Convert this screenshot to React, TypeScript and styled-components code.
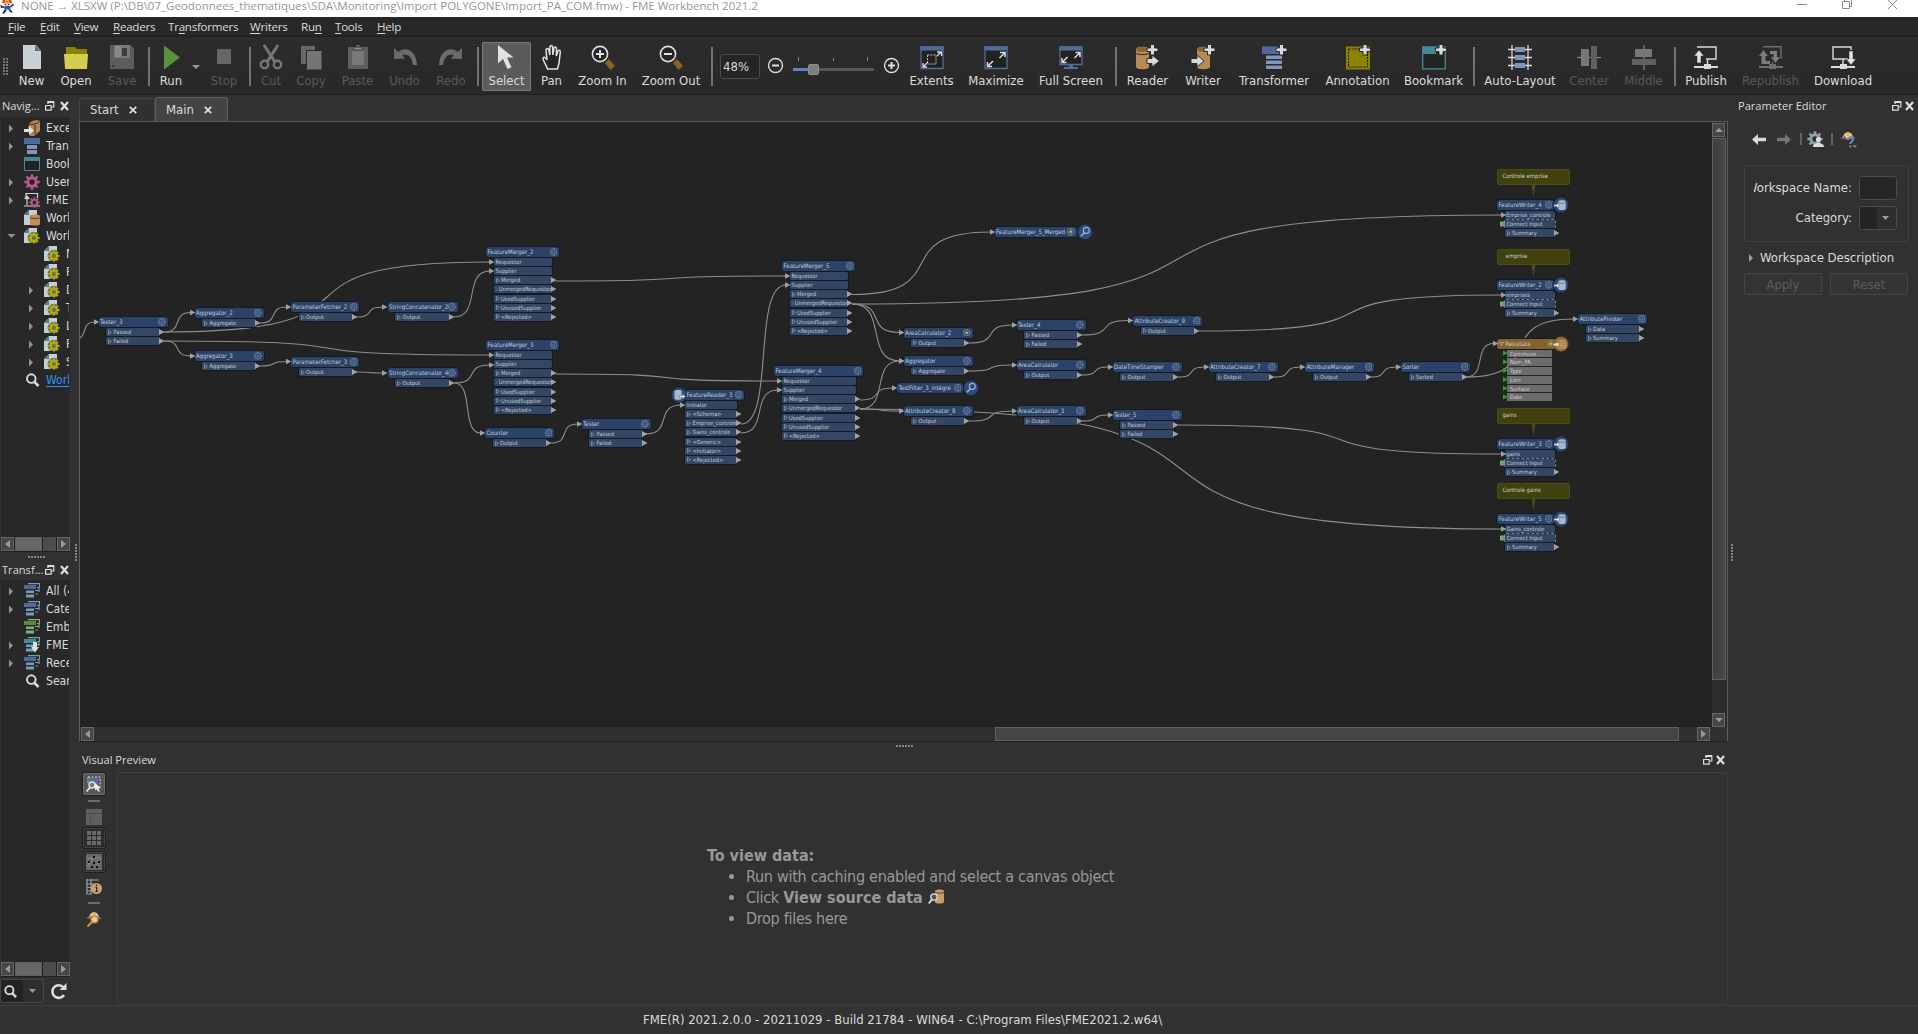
import React from "react";
import styled, { createGlobalStyle, css } from "styled-components";

const UI = `"DejaVu Sans Condensed", "DejaVu Sans", "Noto Sans", sans-serif`;
const CHROME = `"Open Sans", "Noto Sans", sans-serif`;

const Global = createGlobalStyle`
  * { box-sizing: border-box; }
  html, body { margin: 0; padding: 0; background: #313131; }
  body { overflow: hidden; }
`;

/* ---------- shell ---------- */
const Window = styled.div`
  width: 1918px;
  height: 1034px;
  display: flex;
  flex-direction: column;
  overflow: hidden;
  background: #313131;
  color: #dadada;
  font: 13px/16px ${UI};
  font-stretch: condensed;
  white-space: nowrap;
`;
const TitleBar = styled.header`
  height: 17px;
  flex: none;
  display: flex;
  justify-content: space-between;
  background: #fff;
  color: #979797;
  font: 11.5px/14px ${CHROME};
`;
const TitleText = styled.div`
  display: flex;
  gap: 6px;
  height: 14px;
  margin-top: -1px;
`;
const MenuBar = styled.nav`
  height: 20px;
  flex: none;
  display: flex;
  align-items: center;
  gap: 14px;
  padding-left: 8px;
  background: #282828;
  border-bottom: 1px solid #1f1f1f;
  font: 11.6px/18px ${CHROME};
`;
const MenuItem = styled.span<{ $w: number }>`
  width: ${(p) => p.$w}px;
  letter-spacing: -0.25px;
  & > u { text-underline-offset: 2px; }
`;
const Toolbar = styled.div`
  height: 58px;
  flex: none;
  display: flex;
  align-items: stretch;
  background: linear-gradient(#2c2c2c, #282828);
  border-bottom: 1px solid #1f1f1f;
  padding: 5px 0 3px;
`;
const Grip = styled.div`
  width: 10px;
  margin: 16px 0 17px;
  padding-left: 3px;
  & > i {
    display: block;
    width: 6px;
    height: 17px;
    background: radial-gradient(circle at 1px 1px, #757575 1px, transparent 1.2px) 0 0 / 3px 3px;
  }
`;
const ToolButton = styled.div<{ $w: number; $off?: boolean; $on?: boolean }>`
  width: ${(p) => p.$w}px;
  flex: none;
  display: flex;
  flex-direction: column;
  align-items: center;
  padding-top: 2px;
  color: ${(p) => (p.$off ? "#595959" : "#dcdcdc")};
  ${(p) =>
    p.$on &&
    css`
      background: #5b5b5b;
      border-radius: 2px;
      box-shadow: inset 0 0 0 1px #7a7a7a;
    `}
  & > svg { flex: none; }
  & > span { margin-top: 3px; line-height: 16px; }
`;
const ToolSep = styled.div<{ $w: number }>`
  width: ${(p) => p.$w}px;
  flex: none;
  display: flex;
  justify-content: center;
  padding: 5px 0;
  &::before { content: ""; width: 2px; height: 39px; background: #737373; }
`;
const RunMenu = styled.div`
  width: 14px;
  padding: 15px 3px 0;
`;
const ZoomBox = styled.div`
  width: 40px;
  height: 25px;
  margin: 12px 7px 0 5px;
  padding-left: 2px;
  line-height: 23px;
  border: 1px solid #4b4b4b;
  border-radius: 3px;
  background: #242424;
`;
const ZoomSlider = styled.div`
  display: flex;
  align-items: center;
  gap: 9px;
  width: 135px;
  padding-bottom: 2px;
`;

/* ---------- body ---------- */
const Body = styled.main`
  height: 910px;
  flex: none;
  display: flex;
`;
const LeftDock = styled.aside`
  width: 70px;
  flex: none;
  display: flex;
  flex-direction: column;
  overflow: hidden;
`;
const DockTitle = styled.div<{ $h: number; $pl: number; $pr: number }>`
  height: ${(p) => p.$h}px;
  flex: none;
  display: flex;
  align-items: center;
  justify-content: space-between;
  padding: 0 ${(p) => p.$pr}px 0 ${(p) => p.$pl}px;
  font: 11.1px/16px ${CHROME};
  & > svg { flex: none; }
`;
const Tree = styled.div<{ $h: number }>`
  height: ${(p) => p.$h}px;
  flex: none;
  display: flex;
  flex-direction: column;
  justify-content: space-between;
  margin-left: 1px;
  padding-top: 2px;
  background: #282828;
  overflow: hidden;
`;
const TreeRow = styled.div<{ $deep?: boolean; $link?: boolean }>`
  height: 18px;
  width: 68px;
  display: flex;
  align-items: center;
  padding-left: ${(p) => (p.$deep ? 26 : 6)}px;
  overflow: hidden;
  & > svg { flex: none; }
  & > svg + svg { margin-left: 8px; }
  & > span {
    margin-left: 6px;
    font-size: 12.1px;
    ${(p) => p.$link && "color:#2e93f0; text-decoration: underline; text-underline-offset: 2px;"}
  }
`;
const HBar = styled.div`
  height: 15px;
  flex: none;
  display: flex;
  gap: 1px;
  padding-bottom: 1px;
  background: #1f1f1f;
`;
const BarButton = styled.div`
  width: 13px;
  height: 14px;
  flex: none;
  display: flex;
  align-items: center;
  justify-content: center;
  border: 1px solid #666;
  background: #464646;
`;
const BarThumb = styled.div<{ $w?: number; $h?: number; $tone?: string; $ml?: number }>`
  ${(p) => (p.$w ? `width:${p.$w}px;` : "")}
  ${(p) => (p.$h ? `height:${p.$h}px;` : "")}
  ${(p) => (p.$ml ? `margin-left:${p.$ml}px;` : "")}
  flex: none;
  border: 1px solid #606060;
  background: ${(p) => p.$tone ?? "#676767"};
`;
const BarGroove = styled.div`
  flex: 1;
  background: #4c4c4c;
`;
const Dots = styled.div<{ $vertical?: boolean }>`
  width: ${(p) => (p.$vertical ? 2 : 17)}px;
  height: ${(p) => (p.$vertical ? 17 : 2)}px;
  background: repeating-linear-gradient(
    ${(p) => (p.$vertical ? "180deg" : "90deg")}, #858585 0 2px, transparent 2px 3px);
`;
const SplitRow = styled.div<{ $h: number; $pl: number; $pt: number }>`
  height: ${(p) => p.$h}px;
  flex: none;
  padding: ${(p) => p.$pt}px 0 0 ${(p) => p.$pl}px;
`;
const SplitCol = styled.div<{ $w: number; $pl: number }>`
  width: ${(p) => p.$w}px;
  flex: none;
  padding: 449px 0 0 ${(p) => p.$pl}px;
`;
const SearchRow = styled.div`
  height: 28px;
  display: flex;
  align-items: center;
  gap: 6px;
`;
const SearchCombo = styled.div`
  width: 44px;
  height: 24px;
  display: flex;
  align-items: center;
  gap: 12px;
  padding-left: 3px;
  border: 1px solid #474747;
  border-radius: 2px;
  background: linear-gradient(90deg, #222 22px, #2e2e2e 22px);
`;

/* ---------- centre ---------- */
const Centre = styled.section`
  width: 1650px;
  flex: none;
  display: flex;
  flex-direction: column;
`;
const Tabs = styled.div`
  height: 26px;
  flex: none;
  display: flex;
  align-items: flex-end;
`;
const Tab = styled.div<{ $on?: boolean }>`
  width: ${(p) => (p.$on ? 73 : 76)}px;
  height: ${(p) => (p.$on ? 24 : 23)}px;
  display: flex;
  align-items: center;
  justify-content: space-between;
  padding: 0 ${(p) => (p.$on ? 15 : 17)}px 0 10px;
  border: 1px solid ${(p) => (p.$on ? "#5f5f5f" : "#464646")};
  border-bottom: 0;
  border-radius: 3px 3px 0 0;
  background: ${(p) => (p.$on ? "#434343" : "#303030")};
`;
const CanvasFrame = styled.div`
  height: 621px;
  flex: none;
  display: grid;
  grid-template-columns: 1632px 15px;
  grid-template-rows: 605px 14px;
  width: 1649px;
  border: 1px solid #5c5c5c;
  border-bottom-color: #212121;
  background: #303030;
`;
const Canvas = styled.div`
  position: relative;
  overflow: hidden;
  background: #232323;
`;
const VBar = styled.div`
  display: flex;
  flex-direction: column;
  gap: 1px;
  padding: 1px 1px 0 0;
  background: #2c2c2c;
  & > ${BarButton}:last-child { margin-top: auto; }
`;
const CanvasHBar = styled.div`
  display: flex;
  justify-content: space-between;
  padding: 0 2px 0 1px;
`;
const Wires = styled.svg`
  position: absolute;
  left: 0;
  top: 0;
`;
const PreviewBody = styled.div`
  display: flex;
  height: 232px;
`;
const PreviewTools = styled.div`
  width: 38px;
  padding-left: 3px;
  display: flex;
  flex-direction: column;
`;
const PreviewTool = styled.div<{ $frame?: "on" | "line"; $h: number; $mb?: number }>`
  width: 24px;
  height: ${(p) => p.$h}px;
  margin-bottom: ${(p) => p.$mb ?? 0}px;
  flex: none;
  display: flex;
  align-items: center;
  justify-content: center;
  border: 1px solid ${(p) => (p.$frame ? "#1f1f1f" : "transparent")};
  border-radius: 3px;
  ${(p) => p.$frame === "on" && "background:#565656; box-shadow: inset 0 0 0 1px #6d6d6d;"}
  ${(p) => p.$frame === "line" && "background:#2b2b2b; box-shadow: inset 0 0 0 1px #434343;"}
`;
const ToolDash = styled.div`
  width: 12px;
  height: 2px;
  margin: 4px 6px 5px;
  flex: none;
  background: #6c6c6c;
`;
const PreviewPane = styled.div`
  flex: none;
  width: 1611px;
  border: 1px solid #3e3e3e;
  border-radius: 2px;
  padding: 72px 0 0 589px;
  color: #989898;
  font-size: 16px;
  line-height: 21px;
`;
const Hints = styled.ul`
  margin: 0;
  padding: 0 0 0 39px;
  letter-spacing: -0.28px;
  & b { letter-spacing: 0; }
  & svg { vertical-align: -1px; margin-left: 5px; }
`;

/* ---------- parameter editor ---------- */
const RightDock = styled.aside`
  width: 184px;
  flex: none;
`;
const EditorTools = styled.div`
  height: 44px;
  margin-bottom: 4px;
  display: flex;
  align-items: center;
  padding: 0 0 0 16px;
`;
const EditorSep = styled.i<{ $l: number; $r: number }>`
  width: 2px;
  height: 12px;
  margin: 0 ${(p) => p.$r}px 0 ${(p) => p.$l}px;
  background: #626262;
`;
const Group = styled.div`
  width: 165px;
  height: 77px;
  margin-left: 10px;
  padding: 10px 12px 0 9px;
  border: 1px solid #3f3f3f;
  border-radius: 2px;
  display: grid;
  grid-template-columns: 98px 38px;
  grid-template-rows: 24px 24px;
  gap: 6px 7px;
`;
const FieldLabel = styled.label`
  display: flex;
  justify-content: flex-end;
  align-items: center;
  overflow: hidden;
`;
const Field = styled.div<{ $combo?: boolean }>`
  border: 1px solid #4a4a4a;
  border-radius: 3px;
  background: ${(p) => (p.$combo ? "linear-gradient(90deg,#242424 17px,#2e2e2e 17px)" : "#262626")};
  display: flex;
  align-items: center;
  justify-content: flex-end;
  padding-right: 7px;
`;
const Disclosure = styled.div`
  height: 31px;
  display: flex;
  align-items: center;
  gap: 7px;
  padding-left: 15px;
`;
const ButtonRow = styled.div`
  display: flex;
  gap: 8px;
  padding-left: 10px;
`;
const FlatButton = styled.div`
  width: 78px;
  height: 22px;
  border: 1px solid #464646;
  border-radius: 2px;
  background: #343434;
  color: #5c5c5c;
  text-align: center;
  line-height: 21px;
`;
const StatusBar = styled.footer`
  flex: 1;
  border-top: 1px solid #3f3f3f;
  border-bottom: 2px solid #282428;
  padding-left: 643px;
  line-height: 28px;
  background: #323232;
`;

/* ---------- canvas objects ---------- */
const NodeBox = styled.div`
  position: absolute;
  display: flex;
  flex-direction: column;
  font: 6.05px/8px ${UI};
  font-stretch: condensed;
  color: #c3ccd8;
`;
const NodeHead = styled.div<{ $w: number; $gold?: boolean }>`
  width: ${(p) => p.$w}px;
  height: 10px;
  display: flex;
  align-items: center;
  justify-content: space-between;
  padding: 0 2px 0 1.5px;
  border-radius: 2.5px;
  background: ${(p) => (p.$gold ? "#866229" : "#2b4368")};
  box-shadow: 0 0 0 1px #151b25;
  & > svg { flex: none; }
`;
const Ports = styled.div<{ $ml: number }>`
  display: flex;
  flex-direction: column;
  gap: 1px;
  margin: 1px 0 0 ${(p) => p.$ml}px;
  font-size: 5.7px;
`;
const PortRow = styled.div<{ $w: number; $dashed?: boolean }>`
  width: ${(p) => p.$w + 4}px;
  height: 8.15px;
  display: flex;
  align-items: center;
  & > span {
    width: ${(p) => p.$w}px;
    height: 8px;
    flex: none;
    display: flex;
    align-items: center;
    gap: 1.5px;
    padding-left: 2px;
    border-radius: 1.5px;
    background: #334764;
    box-shadow: 0 0 0 1px #161a20;
    ${(p) => p.$dashed && "outline: 1px dashed #71809a; outline-offset: -0.5px; box-shadow: none;"}
  }
  & > svg { flex: none; margin-left: -1px; }
`;
const Badge = styled.svg`
  position: absolute;
  top: -3px;
`;
const AttrRow = styled.div`
  width: 45px;
  height: 7.8px;
  padding-left: 3px;
  background: #6c6c6c;
  color: #d0d0d0;
`;
const Note = styled.div`
  position: absolute;
  width: 73px;
  height: 16px;
  padding-left: 5px;
  border: 1px solid #4a4d1b;
  border-radius: 2px;
  background: #3f420d;
  color: #d2d2c0;
  font: 5.9px/13px ${UI};
  font-stretch: condensed;
  & > svg { position: absolute; left: 33px; top: 14px; }
`;

/* ---------- small glyphs ---------- */
const Tri = ({ dir = "right", c = "#9a9a9a", w = 5, h = 8 }: { dir?: string; c?: string; w?: number; h?: number }) => (
  <svg width={w} height={h} viewBox="0 0 10 10" preserveAspectRatio="none">
    <path fill={c} d={dir === "right" ? "M0 0L10 5L0 10Z" : dir === "left" ? "M10 0L0 5L10 10Z" : dir === "up" ? "M0 10L5 0L10 10Z" : "M0 0H10L5 10Z"} />
  </svg>
);
const Cross = ({ s = 9 }: { s?: number }) => (
  <svg width={s} height={s} viewBox="0 0 10 10"><path d="M1 1L9 9M9 1L1 9" stroke="#dedede" strokeWidth="2.2" /></svg>
);
const DockButtons = ({ gap = 4 }: { gap?: number }) => (
  <svg width={18 + gap} height="10" viewBox={`0 0 ${18 + gap} 10`} fill="none">
    <path d="M3 3V0.8H8.8V6H6.5" stroke="#dedede" strokeWidth="1.2" /><path d="M2.5 1H9" stroke="#dedede" strokeWidth="2" />
    <path d="M0.6 4.5H6.2V9.2H0.6Z" stroke="#dedede" strokeWidth="1.2" />
    <path d={`M${10 + gap} 1l7 8m0 -8l-7 8`} stroke="#dedede" strokeWidth="2.2" />
  </svg>
);
const gearPath = (n: number, r: number, R: number, c: number) => {
  const p: string[] = [];
  for (let i = 0; i < n; i++) {
    const a = (i * 2 * Math.PI) / n;
    const s = Math.PI / n;
    [[a - s * 0.62, r], [a - s * 0.42, R], [a + s * 0.42, R], [a + s * 0.62, r]].forEach(([t, q]) =>
      p.push(`${(c + q * Math.cos(t)).toFixed(2)} ${(c + q * Math.sin(t)).toFixed(2)}`)
    );
  }
  return `M${p.join("L")}Z`;
};
const GEAR = gearPath(8, 5.6, 7.8, 8);
const Gear = ({ c }: { c: string }) => (
  <path fillRule="evenodd" fill={c} d={`${GEAR}M8 5.2a2.8 2.8 0 1 0 0.01 0Z`} />
);
const Plus = () => <path d="M14 5.5h3.5V2h4v3.5H25v3.5h-3.5v3.5h-4V9H14z" fill="#d9d9d9" stroke="#2b2b2b" strokeWidth="1" />;

const Search = ({ s = 14 }: { s?: number }) => (
  <svg width={s} height={s} viewBox="0 0 14 14" fill="none" stroke="#dcdcdc">
    <circle cx="5.8" cy="5.6" r="4.4" strokeWidth="2" /><path d="M9 9L13 13" strokeWidth="2.6" />
  </svg>
);

/* ---------- toolbar drawings (24 x 26) ---------- */
const toolArt: Record<string, React.ReactNode> = {
  New: <><path d="M3 1H16L21 7V25H3Z" fill="#c9d1d4" /><path d="M15 1L21 7H15Z" fill="#5b7688" /></>,
  Open: <><path d="M2 12V3H11L13 5H23V12Z" fill="#8d8200" /><path d="M0 10H24L23 25H1Z" fill="#d3cd50" /></>,
  Save: <><path d="M0 1H20L24 4V25H0Z" fill="#5c5c5c" /><path d="M4 1H20V14H4Z" fill="#777" /><path d="M5 2H11V13H5Z" fill="#8a8a8a" /><path d="M12 4H17V12H12Z" fill="#3c3c3c" /><path d="M2.500 21H4V23H2.500Z" fill="#222" /></>,
  Run: <path d="M5 1.500L21 13.500L5 25.500Z" fill="#5a9340" />,
  Stop: <path d="M5 5H19V20H5Z" fill="#666" />,
  Cut: <g fill="none" stroke="#767676"><path d="M5 1L16 18M19 1L8 18" strokeWidth="3" /><circle cx="5.500" cy="20.500" r="3.700" strokeWidth="2.400" /><circle cx="18.500" cy="20.500" r="3.700" strokeWidth="2.400" /></g>,
  Copy: <><path d="M2 2H16V20H2Z" fill="#676767" /><path d="M7.500 6.500H23V26H7.500Z" fill="#757575" stroke="#2a2a2a" /></>,
  Paste: <><path d="M2 3H22V25H2Z" fill="#5f5f5f" /><path d="M6 7H18V21H6Z" fill="#787878" /><path d="M8 3H16V6H8ZM10 1H14V3H10Z" fill="#8a8a8a" stroke="#2a2a2a" strokeWidth=".6" /></>,
  Undo: <path d="M1 4L5 8C13 2 23 6 24 21H20C19 12 14 9 9 11L12 14.500L1 15Z" fill="#6c6c6c" />,
  Redo: <path d="M23 4L19 8C11 2 1 6 0 21H4C5 12 10 9 15 11L12 14.500L23 15Z" fill="#6c6c6c" />,
  Select: <path d="M3 1V19.500L8 15L12.500 25L16.500 23.200L12 13.500H18.500Z" fill="#e0e0e0" />,
  Pan: <path d="M7.500 25C6 20 3.500 18 3 14.500C3.500 12.500 5.500 13 7 16L6 6C6.500 4 8.300 4 8.800 6L9.800 11L9.900 3C10.300 1 12.300 1 12.600 3L12.900 11L14 4C14.600 2.500 16.300 2.600 16.500 4.500L16.300 12L18 7C19 5.500 20.500 6.500 20.300 8L19 19L17.500 25Z" fill="#242424" stroke="#e2e2e2" strokeWidth="1.500" />,
  "Zoom In": <><path d="M14 19L18 15L24 22L19.500 26Z" fill="#8a6127" /><circle cx="9" cy="10" r="7.600" fill="#252525" stroke="#dedede" strokeWidth="1.600" /><path d="M5 10H13M9 6V14" stroke="#e2e2e2" strokeWidth="2" /></>,
  "Zoom Out": <><path d="M14 19L18 15L24 22L19.500 26Z" fill="#8a6127" /><circle cx="9" cy="10" r="7.600" fill="#252525" stroke="#dedede" strokeWidth="1.600" /><path d="M5 10H13" stroke="#e2e2e2" strokeWidth="2" /></>,
  Extents: <><path d="M1 3H23V24.500H1Z" fill="#222" stroke="#526c98" strokeWidth="1.300" /><path d="M0.500 2.500H23.500V6.500H0.500Z" fill="#526c98" /><path d="M7.500 11H16V20H7.500Z" fill="none" stroke="#bbb" strokeDasharray="2 1" /><path d="M17 8H21.500V12M21 8L17 12M3 19V23H7M3.500 22.500L8 18" fill="none" stroke="#ddd" strokeWidth="1.300" /></>,
  Maximize: <><path d="M1 3H23V24.500H1Z" fill="#222" stroke="#526c98" strokeWidth="1.300" /><path d="M0.500 2.500H23.500V6.500H0.500Z" fill="#526c98" /><path d="M16 8.500H21V13M20.500 9L15.500 14M3.500 18V22.500H8M4 22L9 17" fill="none" stroke="#ddd" strokeWidth="1.500" /></>,
  "Full Screen": <><path d="M1 3H23V20.500H1Z" fill="#222" stroke="#526c98" strokeWidth="1.300" /><path d="M0.500 2.500H23.500V6.500H0.500ZM10 20H14V23H19V25H5V23H10Z" fill="#526c98" /><path d="M16.500 8.500H21V13M20.500 9L15.500 14M3 14V18.500H7.500M3.500 18L8.500 13" fill="none" stroke="#ddd" strokeWidth="1.500" /></>,
  Reader: <><path d="M0 5C0 2 13 2 13 5V23C13 26 0 26 0 23Z" fill="#b88a55" /><ellipse cx="6.500" cy="5.500" rx="6.500" ry="2.500" fill="#8b6537" /><path d="M0 9C0 11 13 11 13 9" stroke="#2a2a2a" fill="none" /><g transform="translate(-3 -1.500)"><Plus /></g><path d="M11 14.500H16V11L23.500 17L16 23V19.500H11Z" fill="#d9d9d9" stroke="#2b2b2b" /></>,
  Writer: <><path d="M6 5C6 2 19 2 19 5V23C19 26 6 26 6 23Z" fill="#b88a55" /><ellipse cx="12.500" cy="5.500" rx="6.500" ry="2.500" fill="#8b6537" /><g transform="translate(-1 -1.500)"><Plus /></g><path d="M0 14.500H6V11L13 17L6 23V19.500H0Z" fill="#d9d9d9" stroke="#2b2b2b" /></>,
  Transformer: <><path d="M0 2.500H22V10H0Z" fill="#4f6a9b" /><path d="M4 11.500H20V15H4ZM4 16.500H20V20H4ZM4 21.500H20V25H4Z" fill="#7f98ba" /><g transform="translate(0 -1.500)"><Plus /></g></>,
  Annotation: <><path d="M0 2.500H24V25.500H0Z" fill="#8c8300" /><path d="M2.500 5H21.500V23H2.500Z" fill="none" stroke="#1f1f1f" strokeDasharray="2 1" /><g transform="translate(-.5 -1.500)"><Plus /></g></>,
  Bookmark: <><path d="M.7 3.200H23.300V24.800H.7Z" fill="#242424" stroke="#43899a" strokeWidth="1.300" /><path d="M0 2.500H14V10H0Z" fill="#43899a" /><g transform="translate(-.5 -1.500)"><Plus /></g></>,
  "Auto-Layout": <><path d="M0 5.500H24M0 13.500H24M0 21.500H24M4 1V26M20 1V26" stroke="#d8d8d8" strokeWidth="1.300" /><path d="M7 3H17V8H7ZM7 11H17V16H7ZM7 19H17V24H7Z" fill="#7c96b8" /></>,
  Center: <><path d="M0 13.500H24" stroke="#888" strokeWidth="1.200" /><path d="M4 5H12V22H4Z" fill="#777" /><path d="M14 2H20V25H14Z" fill="#606060" /></>,
  Middle: <><path d="M12 1V26" stroke="#888" strokeWidth="1.200" /><path d="M3 5H20V13H3Z" fill="#777" /><path d="M0 15H24V21H0Z" fill="#606060" /></>,
  Publish: <><path d="M3 3H22V15H12M13.500 15V22" fill="none" stroke="#dcdcdc" strokeWidth="1.400" /><path d="M0 23H24M10 23H17" stroke="#dcdcdc" strokeWidth="2" /><path d="M10 20H17V25H10Z" fill="#dcdcdc" /><path d="M5 6L10 12H7V19H3V12H0Z" fill="#e2e2e2" stroke="#2b2b2b" strokeWidth=".5" /></>,
  Republish: <><path d="M4 2.700H22V15M13.500 18V22" fill="none" stroke="#6e6e6e" strokeWidth="1.400" /><path d="M0 23H24" stroke="#6e6e6e" strokeWidth="2" /><path d="M10 20H17V25H10Z" fill="#6e6e6e" /><path d="M4.500 6L9 12H6.500V17H11V20H2.500V12H0ZM11 7H18V13H21L16.500 19L12 13H14.500V10H11Z" fill="#7d7d7d" /></>,
  Download: <><path d="M17 15H2V3H20V6M12 15V22" fill="none" stroke="#dcdcdc" strokeWidth="1.400" /><path d="M0 23H24" stroke="#dcdcdc" strokeWidth="2" /><path d="M9 20H16V25H9Z" fill="#dcdcdc" /><path d="M18 7H22V15H25L20 21L15 15H18Z" fill="#e2e2e2" stroke="#2b2b2b" strokeWidth=".5" /></>,
};
const Tool = ({ name, w, off, on }: { name: string; w: number; off?: boolean; on?: boolean }) => (
  <ToolButton $w={w} $off={off} $on={on}>
    <svg width="24" height="26" viewBox="0 0 24 26" overflow="visible">{toolArt[name]}</svg>
    <span>{name}</span>
  </ToolButton>
);

/* ---------- tree drawings (16 x 16) ---------- */
const page = <><path d="M5 0H13V15H0V5Z" fill="#c5cfd3" /><path d="M5 0V5H0Z" fill="#5d7a88" /></>;
const gallery = (a: string, b: string) => (
  <><path d="M4 .6H15.500V4.500M15 9V4.500H13M14.500 7.500H11M14 11H11.500" fill="none" stroke={b} strokeWidth="1.200" /><path d="M0 2H12V6H0Z" fill={a} /><path d="M2 7.500H10V10H2ZM2 11.500H10V14.500H2Z" fill={b} /></>
);
const treeArt: Record<string, React.ReactNode> = {
  reader: <><path d="M5 4C7 0 16 -1 16 2V11L10 16H6L4 10Z" fill="#b58650" /><path d="M5 4C9 5 12 4 15 2M11 5V14" stroke="#2a2a2a" fill="none" /><path d="M0 9H5V6L10 10.500L5 15V12H0Z" fill="#e0e0e0" /></>,
  transformer: <><path d="M0 0H16V6H0Z" fill="#4f6a9b" /><path d="M3 7H13V11H3ZM3 12H13V16H3Z" fill="#7f98ba" /></>,
  bookmark: <><path d="M.5 1.500H15.500V14.500H.5Z" fill="#222" stroke="#43899a" /><path d="M0 1H16V5H0Z" fill="#43899a" /></>,
  pink: <Gear c="#b4588e" />,
  fmeParam: <><path d="M2 5V1.500H13.500V6M0 14H16M3 13V6" stroke="#d5d5d5" fill="none" strokeWidth="1.200" /><path d="M3 3L6 7H0Z" fill="#d5d5d5" /><g transform="translate(5 5) scale(.68)"><Gear c="#b4588e" /></g></>,
  resource: <>{page}<path d="M6 6C6 4 16 4 16 6V14C16 16 6 16 6 14Z" fill="#bd8d56" /><path d="M6 7.500C6 9 16 9 16 7.500" stroke="#2a2a2a" fill="none" strokeWidth=".8" /></>,
  param: <>{page}<g transform="translate(4 4) scale(.74)"><circle cx="8" cy="8" r="8.500" fill="#2b2b20" opacity=".6" /><Gear c="#b6ae00" /></g></>,
  all: gallery("#4f6a9b", "#7f98ba"),
  green: gallery("#568c3c", "#8aae78"),
  hub: <>{gallery("#43899a", "#6fa8b4")}<path d="M9 5H13V10H15L11 15.500L7 10H9Z" fill="#dedede" /></>,
};
type Row = { art: string; text: string; arrow?: string; deep?: boolean; link?: boolean };
const TreeItem = ({ art, text, arrow, deep, link }: Row) => (
  <TreeRow $deep={deep} $link={link}>
    <svg width="9" height="9" viewBox="0 0 9 9">
      {arrow === "r" && <path d="M2 0.500L6 4.500L2 8.500Z" fill="#929292" />}
      {arrow === "d" && <path d="M0.500 2H8.500L4.500 6Z" fill="#929292" />}
    </svg>
    {art === "search" ? (
      <svg width="16" height="16" viewBox="-1.500 -1 16 16" fill="none" stroke="#dcdcdc"><circle cx="5.800" cy="5.600" r="4.300" strokeWidth="1.900" /><path d="M9 9L13 13" strokeWidth="2.500" /></svg>
    ) : (
      <svg width="16" height="16" viewBox="0 0 16 16">{treeArt[art]}</svg>
    )}
    <span>{text}</span>
  </TreeRow>
);
const navRows: Row[] = [
  { art: "reader", text: "Exce", arrow: "r" },
  { art: "transformer", text: "Trans", arrow: "r" },
  { art: "bookmark", text: "Book" },
  { art: "pink", text: "User", arrow: "r" },
  { art: "fmeParam", text: "FME", arrow: "r" },
  { art: "resource", text: "Work" },
  { art: "param", text: "Work", arrow: "d" },
  { art: "param", text: "N", deep: true },
  { art: "param", text: "P", deep: true },
  { art: "param", text: "D", deep: true, arrow: "r" },
  { art: "param", text: "T", deep: true, arrow: "r" },
  { art: "param", text: "L", deep: true, arrow: "r" },
  { art: "param", text: "R", deep: true, arrow: "r" },
  { art: "param", text: "S", deep: true, arrow: "r" },
  { art: "search", text: "Work", link: true },
];
const galleryRows: Row[] = [
  { art: "all", text: "All (4", arrow: "r" },
  { art: "all", text: "Cate", arrow: "r" },
  { art: "green", text: "Emb" },
  { art: "hub", text: "FME", arrow: "r" },
  { art: "all", text: "Rece", arrow: "r" },
  { art: "search", text: "Sear" },
];

/* ---------- workflow data, in window coordinates; OX/OY is the canvas origin ---------- */
const OX = 80;
const OY = 122;
type NodeT = { n: string; x: number; y: number; w: number; pw: number; pl?: number; ins?: string[]; outs?: string[]; badge?: "view" | "write" | "read"; on?: boolean };
const merger = ["Merged", "UnmergedRequestor", "UsedSupplier", "UnusedSupplier", "<Rejected>"];
const nodes: NodeT[] = [
  { n: "Tester_3", x: 98.5, y: 322, w: 69, pw: 54, outs: ["Passed", "Failed"] },
  { n: "Aggregator_2", x: 194.5, y: 313, w: 69, pw: 54, outs: ["Aggregate"] },
  { n: "Aggregator_3", x: 194.5, y: 356, w: 69, pw: 54, outs: ["Aggregate"] },
  { n: "ParameterFetcher_2", x: 291, y: 307, w: 68, pw: 54, outs: ["Output"] },
  { n: "ParameterFetcher_3", x: 291, y: 362, w: 68, pw: 54, outs: ["Output"] },
  { n: "StringConcatenator_2", x: 387.5, y: 307, w: 70, pw: 55, outs: ["Output"] },
  { n: "StringConcatenator_4", x: 387.5, y: 373, w: 70, pw: 55, outs: ["Output"] },
  { n: "FeatureMerger_2", x: 486, y: 252, w: 73, pw: 58, ins: ["Requestor", "Supplier"], outs: merger },
  { n: "FeatureMerger_3", x: 486, y: 345, w: 73, pw: 58, ins: ["Requestor", "Supplier"], outs: merger },
  { n: "Counter", x: 485, y: 433, w: 69, pw: 54, outs: ["Output"] },
  { n: "Tester", x: 581.5, y: 424, w: 69, pw: 54, outs: ["Passed", "Failed"] },
  { n: "FeatureReader_3", x: 685, y: 395, w: 59, pw: 52, pl: 0, ins: ["Initiator"], outs: ["<Schema>", "Emprise_controle", "Gains_controle", "<Generic>", "<Initiator>", "<Rejected>"], badge: "read" },
  { n: "FeatureMerger_5", x: 782, y: 266, w: 73, pw: 58, ins: ["Requestor", "Supplier"], outs: merger },
  { n: "FeatureMerger_4", x: 774, y: 371, w: 89, pw: 74, ins: ["Requestor", "Supplier"], outs: merger },
  { n: "AreaCalculator_2", x: 903.5, y: 332.5, w: 69, pw: 54, outs: ["Output"], on: true },
  { n: "Aggregator", x: 903.5, y: 361, w: 69, pw: 54, outs: ["Aggregate"] },
  { n: "TestFilter_3_intégré", x: 897, y: 388, w: 66, pw: 0, badge: "view" },
  { n: "AttributeCreator_8", x: 903.5, y: 411, w: 69, pw: 54, outs: ["Output"] },
  { n: "FeatureMerger_5_Merged", x: 994.5, y: 232, w: 82, pw: 0, badge: "view", on: true },
  { n: "Tester_4", x: 1016.5, y: 325, w: 69, pw: 54, outs: ["Passed", "Failed"] },
  { n: "AttributeCreator_9", x: 1133, y: 320.5, w: 69, pw: 54, outs: ["Output"] },
  { n: "AreaCalculator", x: 1016.5, y: 365, w: 69, pw: 54, outs: ["Output"] },
  { n: "DateTimeStamper", x: 1112.5, y: 367, w: 69, pw: 54, outs: ["Output"] },
  { n: "AttributeCreator_7", x: 1208.5, y: 367, w: 69, pw: 54, outs: ["Output"] },
  { n: "AreaCalculator_3", x: 1016.5, y: 411, w: 69, pw: 54, outs: ["Output"] },
  { n: "Tester_5", x: 1112.5, y: 415, w: 69, pw: 54, outs: ["Passed", "Failed"] },
  { n: "AttributeManager", x: 1305, y: 367, w: 69, pw: 54, outs: ["Output"] },
  { n: "Sorter", x: 1401, y: 367, w: 69, pw: 54, outs: ["Sorted"] },
  { n: "AttributePivoter", x: 1578, y: 319, w: 69, pw: 54, outs: ["Data", "Summary"] },
  { n: "FeatureWriter_4", x: 1497, y: 205, w: 57, pw: 50, ins: ["Emprise_controle", "Connect Input"], outs: ["Summary"], badge: "write" },
  { n: "FeatureWriter_2", x: 1497, y: 285, w: 57, pw: 50, ins: ["emprises", "Connect Input"], outs: ["Summary"], badge: "write" },
  { n: "FeatureWriter_3", x: 1497, y: 444, w: 57, pw: 50, ins: ["gains", "Connect Input"], outs: ["Summary"], badge: "write" },
  { n: "FeatureWriter_5", x: 1497, y: 519, w: 57, pw: 50, ins: ["Gains_controle", "Connect Input"], outs: ["Summary"], badge: "write" },
];
/* x1, y1, x2, y2 */
const links: number[][] = [
  [74, 339, 95, 322],
  [164, 332, 191, 312.500], [164, 332, 490, 262], [164, 341, 191, 356], [164, 341, 490, 355],
  [260, 323, 287, 307], [260, 366, 287, 361.500], [356, 317, 383, 307], [356, 372, 383, 373],
  [454, 317, 490, 271], [454, 383, 490, 365], [454, 383, 481, 433],
  [551, 443, 578, 424], [646, 434, 681, 405],
  [555, 281, 786, 276], [555, 374, 778, 381],
  [741, 424, 786, 285], [741, 433, 778, 390],
  [852, 294.500, 991, 232], [852, 304, 900, 332.500], [852, 304, 900, 361], [852, 304, 1502, 215],
  [860, 400, 893, 388], [860, 409, 900, 361], [860, 409, 900, 411], [860, 409, 1502, 529],
  [969, 343, 1013, 325], [969, 371, 1013, 365], [969, 421, 1013, 411],
  [1082, 335, 1129, 320.500], [1082, 375, 1109, 367], [1082, 421, 1109, 415],
  [1178, 377, 1205, 367], [1178, 425, 1502, 454], [1199, 331, 1502, 295],
  [1274, 377, 1301, 367], [1370, 377, 1397, 367], [1466, 377, 1494, 343.500], [1466, 377, 1574, 319],
];
const wire = ([a, b, c, d]: number[]) => {
  const k = (c - a) * 0.76;
  return `M${a - OX} ${b - OY}C${a + k - OX} ${b - OY} ${c - k - OX} ${d - OY} ${c - OX} ${d - OY}`;
};
const badgeArt = {
  view: <><circle cx="8.800" cy="5.900" r="3" fill="none" stroke="#9db2d0" strokeWidth="1.100" /><path d="M6.800 8.200L3.300 11.700" stroke="#9db2d0" strokeWidth="1.600" /></>,
  write: <><path d="M4.800 4C4.800 2.300 12.200 2.300 12.200 4V11.200C12.200 13 4.800 13 4.800 11.200Z" fill="#a9b7c9" /><path d="M4.800 4.600C4.800 6.200 12.200 6.200 12.200 4.600" fill="none" stroke="#4d6588" strokeWidth=".7" /><path d="M0.500 7H3.500V5.500L6.500 8L3.500 10.500V9H0.500Z" fill="#e6eaee" stroke="#2e4d7c" strokeWidth=".4" /></>,
  read: <><path d="M3 3.800C3 2.200 10.200 2.200 10.200 3.800V11C10.200 12.800 3 12.800 3 11Z" fill="#a9b7c9" /><path d="M8 8H11V6.500L14 9L11 11.500V10H8Z" fill="#e6eaee" stroke="#2e4d7c" strokeWidth=".4" /></>,
};
const HeadGear = ({ on }: { on?: boolean }) => (
  <svg width="7.500" height="7.500" viewBox="0 0 16 16">
    <path d={GEAR} fill="none" stroke="#8798b3" strokeWidth="1.500" />
    <circle cx="8" cy="8" r="2.400" fill={on ? "#cfc52a" : "none"} stroke={on ? "#cfc52a" : "#8798b3"} strokeWidth="1.200" />
  </svg>
);
const WorkNode = (p: NodeT) => (
  <NodeBox style={{ left: p.x - OX, top: p.y - 5 - OY }}>
    <NodeHead $w={p.w}>
      {p.n}
      <HeadGear on={p.on} />
    </NodeHead>
    {p.badge && (
      <Badge width="16" height="16" viewBox="-.5 -.5 16 16" style={{ left: p.badge === "read" ? -14.5 : p.w - (p.badge === "write" ? 1 : 0) }}>
        <circle cx="7.500" cy="7.500" r="7.400" fill="#2e4d7c" stroke="#1a2a44" strokeWidth=".6" />
        {badgeArt[p.badge]}
      </Badge>
    )}
    <Ports $ml={p.pl ?? 7.5}>
      {p.ins?.map((t) => (
        <PortRow key={t} $w={p.pw} $dashed={t === "Connect Input"}><span>{t}</span></PortRow>
      ))}
      {p.outs?.map((t) => (
        <PortRow key={t} $w={p.pw}>
          <span>
            <svg width="4" height="5" viewBox="0 0 4 5"><path d="M.5 .5L3.500 2.500L.5 4.500Z" fill="none" stroke="#aab4c2" strokeWidth=".6" /></svg>
            {t}
          </span>
          <svg width="5.500" height="6" viewBox="0 0 5.500 6"><path d="M0 0L5.500 3L0 6Z" fill="#a3a3a3" /></svg>
        </PortRow>
      ))}
    </Ports>
  </NodeBox>
);
const notes = [
  { t: "Controle emprise", y: 169 },
  { t: "\u00a0 emprise", y: 249 },
  { t: "gains", y: 408 },
  { t: "Controle gains", y: 483 },
];
const attrs = ["Commune", "Nom_PA", "Type", "Lien", "Surface", "Date"];

const Workflow = () => (
  <Canvas>
    <Wires width="1632" height="605">
      <g fill="none" stroke="#8f8f8f" strokeWidth="1.100">
        {links.map((l, i) => <path key={i} d={wire(l)} />)}
      </g>
    </Wires>
    {nodes.map((n) => <WorkNode key={n.n} {...n} />)}
    <NodeBox style={{ left: 1497 - OX, top: 338.5 - OY }}>
      <NodeHead $w={59} $gold>
        <span>
          <svg width="5" height="4" viewBox="0 0 5 4"><path d="M.4 .4H4.600L2.500 3.600Z" fill="none" stroke="#d9cdb8" strokeWidth=".6" /></svg> Resultats
        </span>
        <HeadGear on />
      </NodeHead>
      <Badge width="16" height="16" viewBox="-.5 -.5 16 16" style={{ left: 56 }}>
        <circle cx="7.500" cy="7.500" r="7.300" fill="#94713f" stroke="#6b4f26" strokeWidth=".7" />
        <path d="M5 4H12V11.500H5ZM7.300 4V11.500M9.600 4V11.500M5 6.500H12M5 9H12" fill="none" stroke="#c7a878" strokeWidth=".8" />
        <path d="M0 7H3V5.800L5.500 8L3 10.200V9H0Z" fill="#e8e0d2" />
      </Badge>
      <Ports $ml={10}>{attrs.map((a) => <AttrRow key={a}>{a}</AttrRow>)}</Ports>
    </NodeBox>
    {notes.map((n) => (
      <Note key={n.t} style={{ left: 1496.500 - OX, top: n.y - OY }}>
        {n.t}
        <svg width="5" height="13" viewBox="0 0 5 13"><path d="M.5 0H4.500L2.500 13Z" fill="#4a4d1b" /></svg>
      </Note>
    ))}
    <Wires width="1632" height="605">
      {links.map(([, , x, y], i) => (
        <path key={i} d={`M${x - OX - 1} ${y - OY - 2.800}L${x - OX + 4.500} ${y - OY}L${x - OX - 1} ${y - OY + 2.800}Z`} fill="#a0a0a0" />
      ))}
      {attrs.map((a, i) => (
        <path key={a} d={`M${1503 - OX} ${350.500 + i * 8.800 - OY}l5 2.500l-5 2.500z`} fill="#22a522" />
      ))}
      {[224, 304, 463, 538].map((y) => (
        <g key={y}><path d={`M${1500 - OX} ${y - 2.500 - OY}h5v5h-5z`} fill="#8d9a8d" /><circle cx={1503.500 - OX} cy={y - OY} r="1.500" fill="#30c030" /></g>
      ))}
    </Wires>
  </Canvas>
);

const SideBar = () => (
  <HBar>
    <BarButton><Tri dir="left" /></BarButton>
    <BarThumb $w={27} />
    <BarGroove />
    <BarButton><Tri /></BarButton>
  </HBar>
);
const Mascot = () => (
  <svg width="15" height="15" viewBox="0 0 15 15">
    <path d="M3 0H11L12 4H2Z" fill="#d9482b" /><path d="M5 .5H9V2.500H5Z" fill="#f4d33c" /><path d="M4 3.500H10V7H4Z" fill="#f0c49a" />
    <path d="M5 5h1v1H5ZM8 5h1v1H8Z" fill="#222" />
    <path d="M4.500 7H10.500V10.500H4.500Z" fill="#2557c8" /><path d="M0 6L4.500 7.500V9L1 9ZM13 4L14 6L10.500 9V7Z" fill="#444" /><path d="M4.500 10.500H7L4.500 14.500H2ZM8 10.500H10.500L13 13.500H10.500Z" fill="#1c2f6e" />
  </svg>
);
const Cap = ({ help }: { help?: boolean }) => (
  <svg width="17" height="17" viewBox="0 0 17 17">
    <path d="M0 7.500C3 6 4 1 8 1C12 1 13 6 16 7.500C12 9 4 9 0 7.500Z" fill="#6a5a50" />
    <path d="M3 7C4 3 5 1.500 8 1.500C11 1.500 12 3 13 7Z" fill="#e8dccb" /><path d="M5.500 2.500C6.500 1 9.500 1 10.500 2.500L9.500 5H6.500Z" fill="#e0bd3c" />
    <path d="M3 7L5 4L6.500 8ZM11 4L13 7L9.500 8Z" fill="#c94733" />
    {help ? <path d="M7.500 9C7.500 5.500 13 5.500 13 8.500C13 10.500 10.300 10.500 10.300 13M10.300 14.300V16.500" fill="none" stroke="#6f8fc4" strokeWidth="1.900" /> : <><circle cx="8.500" cy="8.500" r="3.400" fill="#e6c88c" stroke="#b98550" strokeWidth="1.300" /><path d="M6 11L1.500 15.500" stroke="#c99453" strokeWidth="2" /></>}
    {help && <path d="M12.500 14.500H17L14.700 16.800Z" fill="#999" />}
  </svg>
);

const menus: [string, string, string, number][] = [
  ["", "F", "ile", 18], ["", "E", "dit", 20], ["", "V", "iew", 25], ["", "R", "eaders", 41], ["Tr", "a", "nsformers", 68],
  ["", "W", "riters", 37], ["Ru", "n", "", 20], ["", "T", "ools", 28], ["", "H", "elp", 25],
];

export default function App() {
  return (
    <Window>
      <Global />
      <TitleBar>
        <TitleText>
          <Mascot />
          <span>NONE → XLSXW (P:\DB\07_Geodonnees_thematiques\SDA\Monitoring\Import POLYGONE\Import_PA_COM.fmw) - FME Workbench 2021.2</span>
        </TitleText>
        <svg width="122" height="13" viewBox="0 0 122 13" fill="none" stroke="#8a8a8a">
          <path d="M1 4.500H11M46.500 1.500H53.500V8.500H46.500ZM48.500 1.500V-.5H55.500V6.500H53.500M92 0L101 9M101 0L92 9" />
        </svg>
      </TitleBar>
      <MenuBar>
        {menus.map(([a, u, b, w]) => (
          <MenuItem key={a + u + b} $w={w}>{a}<u>{u}</u>{b}</MenuItem>
        ))}
      </MenuBar>
      <Toolbar>
        <Grip><i /></Grip>
        <Tool name="New" w={43} /><Tool name="Open" w={46} /><Tool name="Save" w={46} off />
        <ToolSep $w={8} />
        <Tool name="Run" w={36} />
        <RunMenu><Tri dir="down" w={8} h={4} /></RunMenu>
        <Tool name="Stop" w={42} off />
        <ToolSep $w={10} />
        <Tool name="Cut" w={32} off /><Tool name="Copy" w={48} off /><Tool name="Paste" w={45} off /><Tool name="Undo" w={49} off /><Tool name="Redo" w={44} off />
        <ToolSep $w={9} />
        <Tool name="Select" w={49} on /><Tool name="Pan" w={41} /><Tool name="Zoom In" w={61} /><Tool name="Zoom Out" w={76} />
        <ToolSep $w={6} />
        <ZoomBox>48%</ZoomBox>
        <ZoomSlider>
          <svg width="17" height="17" viewBox="0 0 17 17" fill="none" stroke="#dedede"><circle cx="8.500" cy="8.500" r="7" strokeWidth="1.400" /><path d="M5 8.500H12" strokeWidth="2" /></svg>
          <svg width="81" height="22" viewBox="0 0 81 22">
            <path d="M5.500 2V6M40.500 3V6M74.500 2V6" stroke="#8a8a8a" /><path d="M0 13H81V16H0Z" fill="#555" /><path d="M0 13H15V16H0Z" fill="#5f86b8" />
            <rect x="15.500" y="9.500" width="10" height="10" rx="1.500" fill="#7c7c7c" stroke="#909090" />
          </svg>
          <svg width="17" height="17" viewBox="0 0 17 17" fill="none" stroke="#dedede"><circle cx="8.500" cy="8.500" r="7" strokeWidth="1.400" /><path d="M5 8.500H12M8.500 5V12" strokeWidth="2" /></svg>
        </ZoomSlider>
        <Tool name="Extents" w={59} /><Tool name="Maximize" w={70} /><Tool name="Full Screen" w={80} />
        <ToolSep $w={10} />
        <Tool name="Reader" w={53} /><Tool name="Writer" w={58} /><Tool name="Transformer" w={84} /><Tool name="Annotation" w={83} /><Tool name="Bookmark" w={69} />
        <ToolSep $w={12} />
        <Tool name="Auto-Layout" w={80} /><Tool name="Center" w={58} off /><Tool name="Middle" w={51} off />
        <ToolSep $w={12} />
        <Tool name="Publish" w={50} /><Tool name="Republish" w={79} off /><Tool name="Download" w={66} />
      </Toolbar>
      <Body>
        <LeftDock>
          <DockTitle $h={22} $pl={2} $pr={1}><span>Navig...</span><DockButtons gap={6} /></DockTitle>
          <Tree $h={435}>
            <div>{navRows.map((r, i) => <TreeItem key={i} {...r} />)}</div>
            <SideBar />
          </Tree>
          <SplitRow $h={8} $pl={28} $pt={4}><Dots /></SplitRow>
          <DockTitle $h={20} $pl={2} $pr={1}><span>Transf...</span><DockButtons gap={6} /></DockTitle>
          <Tree $h={397}>
            <div>{galleryRows.map((r, i) => <TreeItem key={i} {...r} />)}</div>
            <SideBar />
          </Tree>
          <SearchRow>
            <SearchCombo><Search s={13} /><Tri dir="down" w={7} h={4} /></SearchCombo>
            <svg width="17" height="17" viewBox="0 0 17 17" fill="none"><path d="M13.500 4.500A6.300 6.300 0 1 0 14 12" stroke="#dcdcdc" strokeWidth="2.600" /><path d="M16.500 0V7H9.500Z" fill="#dcdcdc" /></svg>
          </SearchRow>
        </LeftDock>
        <SplitCol $w={9} $pl={5}><Dots $vertical /></SplitCol>
        <Centre>
          <Tabs>
            <Tab>Start<Cross s={8} /></Tab>
            <Tab $on>Main<Cross s={8} /></Tab>
          </Tabs>
          <CanvasFrame>
            <Workflow />
            <VBar>
              <BarButton><Tri dir="up" w={8} h={4} /></BarButton>
              <BarThumb $h={542} $tone="linear-gradient(90deg,#3f3f3f,#484848)" />
              <BarButton><Tri dir="down" w={8} h={4} /></BarButton>
            </VBar>
            <CanvasHBar>
              <BarButton><Tri dir="left" /></BarButton>
              <BarThumb $w={684} $tone="#444" $ml={882} />
              <BarButton><Tri /></BarButton>
            </CanvasHBar>
          </CanvasFrame>
          <SplitRow $h={6} $pl={817} $pt={3}><Dots /></SplitRow>
          <DockTitle $h={24} $pl={3} $pr={4}><span>Visual Preview</span><DockButtons gap={4} /></DockTitle>
          <PreviewBody>
            <PreviewTools>
              <PreviewTool $h={24} $frame="on">
                <svg width="16" height="16" viewBox="0 0 16 16"><path d="M3 2H12V8H3Z" fill="#4f6fa5" /><path d="M2 1H14V11" fill="none" stroke="#ddd" strokeDasharray="2 1.500" /><path d="M2 1V8" stroke="#ddd" strokeDasharray="2 1.500" /><circle cx="6" cy="9" r="3" fill="#777" stroke="#e4e4e4" strokeWidth="1.400" /><path d="M4 11.500L0.500 15.500" stroke="#e4e4e4" strokeWidth="1.800" /><path d="M9 7L15 12L12.500 12.500L14 15.500L12 15.500L10.500 13L9 14.500Z" fill="#eee" /></svg>
              </PreviewTool>
              <ToolDash />
              <PreviewTool $h={20}><svg width="16" height="16" viewBox="0 0 16 16"><path d="M0 0H16V16H0Z" fill="#5f5f5f" /><path d="M0 4.500H16M4.500 4.500V16" stroke="#4d4d4d" /></svg></PreviewTool>
              <PreviewTool $h={22} $mb={2} $frame="line"><svg width="16" height="14" viewBox="0 0 16 14"><path d="M1 0H5V4H1ZM6 0H10V4H6ZM11 0H15V4H11ZM1 5H5V9H1ZM6 5H10V9H6ZM11 5H15V9H11ZM1 10H5V14H1ZM6 10H10V14H6ZM11 10H15V14H11Z" fill="#6a6a6a" /></svg></PreviewTool>
              <PreviewTool $h={22} $mb={3} $frame="line"><svg width="16" height="16" viewBox="0 0 16 16"><path d="M0 0H16V16H0Z" fill="#686868" /><path d="M1 3C5 8 9 0 15 5M2 12L8 3L13 8L10 13" fill="none" stroke="#8c8c8c" /><path d="M7 2h2v2H7ZM2 7h2v2H2ZM12 7h2v2h-2ZM7 8h2v2H7ZM5 12h2v2H5ZM10 12h2v2h-2Z" fill="#0c0c0c" /></svg></PreviewTool>
              <PreviewTool $h={22}><svg width="16" height="16" viewBox="0 0 16 16"><path d="M0.500 1H13M0.500 5H8M0.500 8.500H6M0.500 12H6M0.500 15H6M1 0V15M5 0V15" stroke="#93a5b0" strokeWidth="1.200" /><circle cx="10.500" cy="9.500" r="5.500" fill="#cfa06a" /><path d="M10.500 5.500V7.200M9.500 8.500H10.700V12.500M9.300 12.500H12" stroke="#222" strokeWidth="1.200" fill="none" /></svg></PreviewTool>
              <ToolDash />
              <PreviewTool $h={20}><Cap /></PreviewTool>
            </PreviewTools>
            <PreviewPane>
              <b>To view data:</b>
              <Hints>
                <li>Run with caching enabled and select a canvas object</li>
                <li>
                  Click <b>View source data</b>
                  <svg width="17" height="15" viewBox="0 0 17 15"><path d="M7 2C7 0 16 0 16 2V13C16 15 7 15 7 13Z" fill="#c99a63" /><path d="M7 3C7 4.500 16 4.500 16 3" fill="none" stroke="#3a3023" strokeWidth=".8" /><circle cx="6" cy="8" r="3.200" fill="#555" stroke="#ddd" strokeWidth="1.300" /><path d="M4 10.500L.8 14.300" stroke="#ddd" strokeWidth="1.800" /></svg>
                </li>
                <li>Drop files here</li>
              </Hints>
            </PreviewPane>
          </PreviewBody>
        </Centre>
        <SplitCol $w={5} $pl={2}><Dots $vertical /></SplitCol>
        <RightDock>
          <DockTitle $h={22} $pl={4} $pr={4}><span>Parameter Editor</span><DockButtons gap={4} /></DockTitle>
          <EditorTools>
            <svg width="16" height="13" viewBox="0 0 16 13"><path d="M2 6.500L8 1V4.800H16V8.200H8V12Z" fill="#d9d9d9" /></svg>
            <svg width="16" height="13" viewBox="-9 0 25 13" style={{ width: 25 }}><path d="M16 6.500L10 1V4.800H2V8.200H10V12Z" fill="#757575" /></svg>
            <EditorSep $l={9} $r={5} />
            <svg width="18" height="17" viewBox="0 0 18 17"><Gear c="#8da0ad" /><circle cx="11.500" cy="8.500" r="2.600" fill="#dcdcdc" /><path d="M6 16C6 12.500 9 13 11 11.500C14 13 17 12.500 17 16Z" fill="#dcdcdc" /></svg>
            <EditorSep $l={6} $r={7} />
            <Cap help />
          </EditorTools>
          <Group>
            <FieldLabel>Workspace Name:</FieldLabel><Field />
            <FieldLabel>Category:</FieldLabel><Field $combo><Tri dir="down" w={7} h={4} /></Field>
          </Group>
          <Disclosure><Tri w={4} h={8} />Workspace Description</Disclosure>
          <ButtonRow><FlatButton>Apply</FlatButton><FlatButton>Reset</FlatButton></ButtonRow>
        </RightDock>
      </Body>
      <StatusBar>FME(R) 2021.2.0.0 - 20211029 - Build 21784 - WIN64 - C:\Program Files\FME2021.2.w64\</StatusBar>
    </Window>
  );
}
